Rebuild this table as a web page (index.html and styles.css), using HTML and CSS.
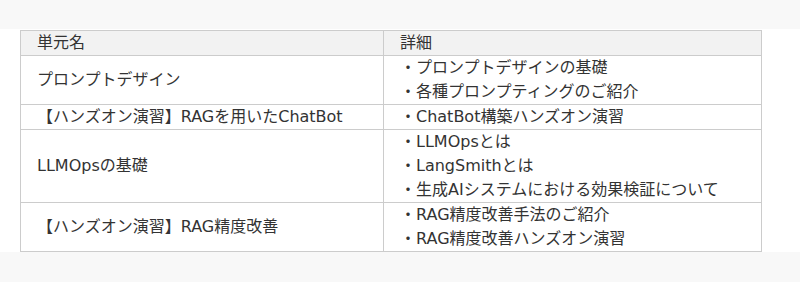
FILE: index.html
```html
<!DOCTYPE html>
<html lang="ja">
<head>
<meta charset="utf-8">
<title>カリキュラム</title>
<link rel="stylesheet" href="styles.css">
</head>
<body>
<div class="top-band"></div>
<section class="content">
  <table class="curriculum">
    <thead>
      <tr><th class="col-name">単元名</th><th class="col-detail">詳細</th></tr>
    </thead>
    <tbody>
      <tr>
        <td>プロンプトデザイン</td>
        <td>・プロンプトデザインの基礎<br>・各種プロンプティングのご紹介</td>
      </tr>
      <tr>
        <td>【ハンズオン演習】RAGを用いたChatBot</td>
        <td>・ChatBot構築ハンズオン演習</td>
      </tr>
      <tr>
        <td>LLMOpsの基礎</td>
        <td>・LLMOpsとは<br>・LangSmithとは<br>・生成AIシステムにおける効果検証について</td>
      </tr>
      <tr>
        <td>【ハンズオン演習】RAG精度改善</td>
        <td>・RAG精度改善手法のご紹介<br>・RAG精度改善ハンズオン演習</td>
      </tr>
    </tbody>
  </table>
</section>
</body>
</html>
```

FILE: styles.css
```css
html, body {
  margin: 0;
  padding: 0;
  background: #f8f8f8;
}
body {
  font-family: "DejaVu Sans", "Noto Sans CJK JP", sans-serif;
  font-size: 16px;
  line-height: 24px;
  color: #333333;
}
.top-band {
  height: 29px;
}
.content {
  background: #ffffff;
  padding: 1px 38px 0 20px;
}
.curriculum {
  width: 742px;
  border-collapse: collapse;
  table-layout: fixed;
}
.curriculum th,
.curriculum td {
  border: 1px solid #cccccc;
  padding: 0 16px;
  text-align: left;
  font-weight: normal;
  vertical-align: middle;
}
.curriculum th {
  background: #f2f2f2;
}
.col-name {
  width: 330px;
}
```
